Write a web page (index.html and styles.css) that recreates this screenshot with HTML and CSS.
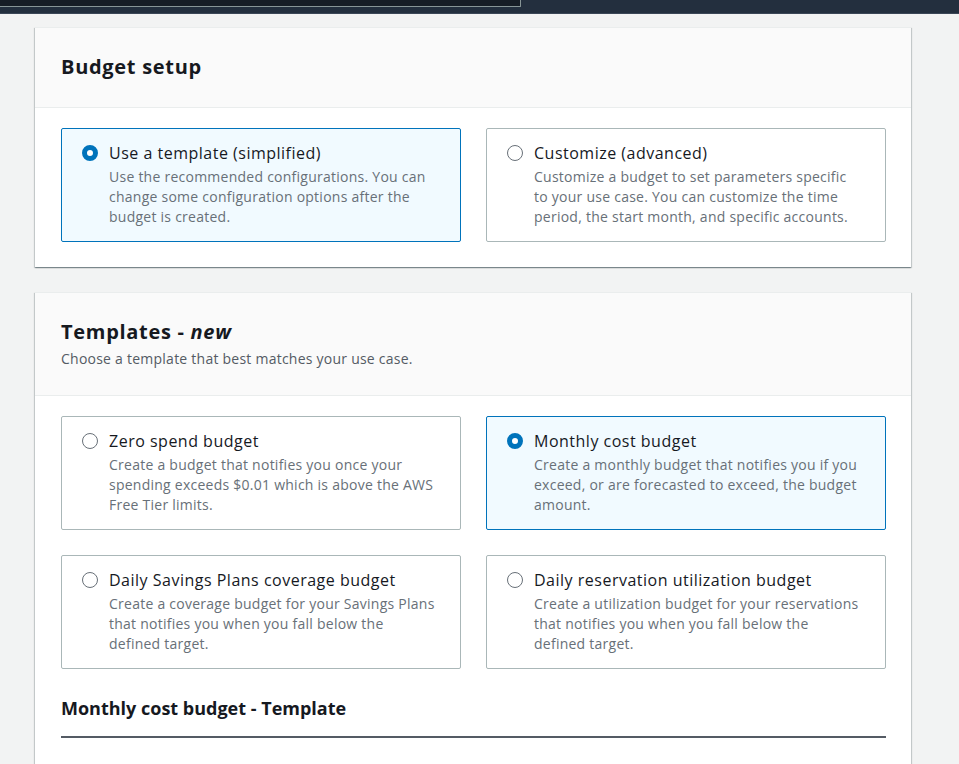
FILE: index.html
```html
<!DOCTYPE html>
<html lang="en">
<head>
<meta charset="utf-8">
<title>Create budget</title>
<link rel="stylesheet" href="styles.css">
</head>
<body>
<div class="topbar"><div class="search"></div></div>
<main class="page">
  <section class="card">
    <header class="card-header">
      <h2 class="card-title">Budget setup</h2>
    </header>
    <div class="card-body">
      <div class="tiles">
        <label class="tile selected">
          <span class="radio on"></span>
          <span class="tile-text">
            <span class="tile-label">Use a template (simplified)</span>
            <span class="tile-desc">Use the recommended configurations. You can change some configuration options after the budget is created.</span>
          </span>
        </label>
        <label class="tile">
          <span class="radio"></span>
          <span class="tile-text">
            <span class="tile-label">Customize (advanced)</span>
            <span class="tile-desc">Customize a budget to set parameters specific to your use case. You can customize the time period, the start month, and specific accounts.</span>
          </span>
        </label>
      </div>
    </div>
  </section>

  <section class="card">
    <header class="card-header">
      <h2 class="card-title">Templates - <em>new</em></h2>
      <p class="card-sub">Choose a template that best matches your use case.</p>
    </header>
    <div class="card-body">
      <div class="tiles">
        <label class="tile">
          <span class="radio"></span>
          <span class="tile-text">
            <span class="tile-label">Zero spend budget</span>
            <span class="tile-desc">Create a budget that notifies you once your spending exceeds $0.01 which is above the AWS Free Tier limits.</span>
          </span>
        </label>
        <label class="tile selected">
          <span class="radio on"></span>
          <span class="tile-text">
            <span class="tile-label">Monthly cost budget</span>
            <span class="tile-desc">Create a monthly budget that notifies you if you exceed, or are forecasted to exceed, the budget amount.</span>
          </span>
        </label>
        <label class="tile">
          <span class="radio"></span>
          <span class="tile-text">
            <span class="tile-label">Daily Savings Plans coverage budget</span>
            <span class="tile-desc">Create a coverage budget for your Savings Plans that notifies you when you fall below the defined target.</span>
          </span>
        </label>
        <label class="tile">
          <span class="radio"></span>
          <span class="tile-text">
            <span class="tile-label">Daily reservation utilization budget</span>
            <span class="tile-desc">Create a utilization budget for your reservations that notifies you when you fall below the defined target.</span>
          </span>
        </label>
      </div>
      <h3 class="section-title">Monthly cost budget - Template</h3>
      <div class="section-body"></div>
    </div>
  </section>
</main>
</body>
</html>
```

FILE: styles.css
```css
* { box-sizing: border-box; }
html, body { margin: 0; padding: 0; }
body {
  background: #f2f3f3;
  font-family: "Open Sans", "Noto Sans", sans-serif;
  color: #16191f;
  height: 764px;
  overflow: hidden;
}
.topbar {
  height: 14px;
  background: #232f3e;
  border-bottom: 1px solid #3a4656;
}
.search {
  width: 521px;
  height: 7px;
  background: #161d26;
  border-right: 1px solid #879596;
  border-bottom: 1px solid #879596;
  border-bottom-right-radius: 1px;
}
.page {
  padding: 13px 0 0 35px;
  width: 911px;
  display: flex;
  flex-direction: column;
  gap: 25px;
}
.card {
  background: #fff;
  box-shadow: 0 1px 1px 0 rgba(0, 28, 36, 0.3), 1px 1px 1px 0 rgba(0, 28, 36, 0.15), -1px 1px 1px 0 rgba(0, 28, 36, 0.15);
  border-top: 1px solid #eaeded;
}
.card-header {
  background: #fafafa;
  border-bottom: 1px solid #eaeded;
  padding: 25px 26px 26px;
}
.card-title {
  margin: 0;
  font-size: 20px;
  line-height: 28px;
  font-weight: 700;
  letter-spacing: 0.7px;
}
.card-title em { font-style: italic; }
.card-sub {
  margin: 3px 0 0;
  font-size: 14px;
  line-height: 20px;
  color: #545b64;
  letter-spacing: 0.24px;
}
.card-body {
  padding: 20px 25px 25px 26px;
}
.tiles {
  display: grid;
  grid-template-columns: 400px 400px;
  column-gap: 25px;
  row-gap: 25px;
}
.tile {
  display: flex;
  align-items: flex-start;
  gap: 11px;
  border: 1px solid #aab7b8;
  border-radius: 2px;
  padding: 13px 24px 14px 20px;
  min-height: 113px;
  background: #fff;
}
.tile.selected {
  border-color: #0073bb;
  background: #f1faff;
}
.radio {
  flex: none;
  width: 16px;
  height: 16px;
  margin-top: 3px;
  border-radius: 50%;
  border: 1.5px solid #687078;
  background: #fff;
}
.radio.on {
  border: 5px solid #0073bb;
  background: #fff;
}
.tile-text {
  display: flex;
  flex-direction: column;
}
.tile-label {
  font-size: 16px;
  line-height: 22px;
  color: #16191f;
  letter-spacing: 0.5px;
}
.tile-desc {
  font-size: 14px;
  line-height: 20px;
  color: #687078;
  margin-top: 3px;
  letter-spacing: 0.25px;
}
.section-title {
  margin: 28px 0 0;
  font-size: 18px;
  line-height: 22px;
  font-weight: 700;
  letter-spacing: 0;
  padding-bottom: 17px;
  border-bottom: 2px solid #545b64;
}
.section-body {
  height: 120px;
}
```
